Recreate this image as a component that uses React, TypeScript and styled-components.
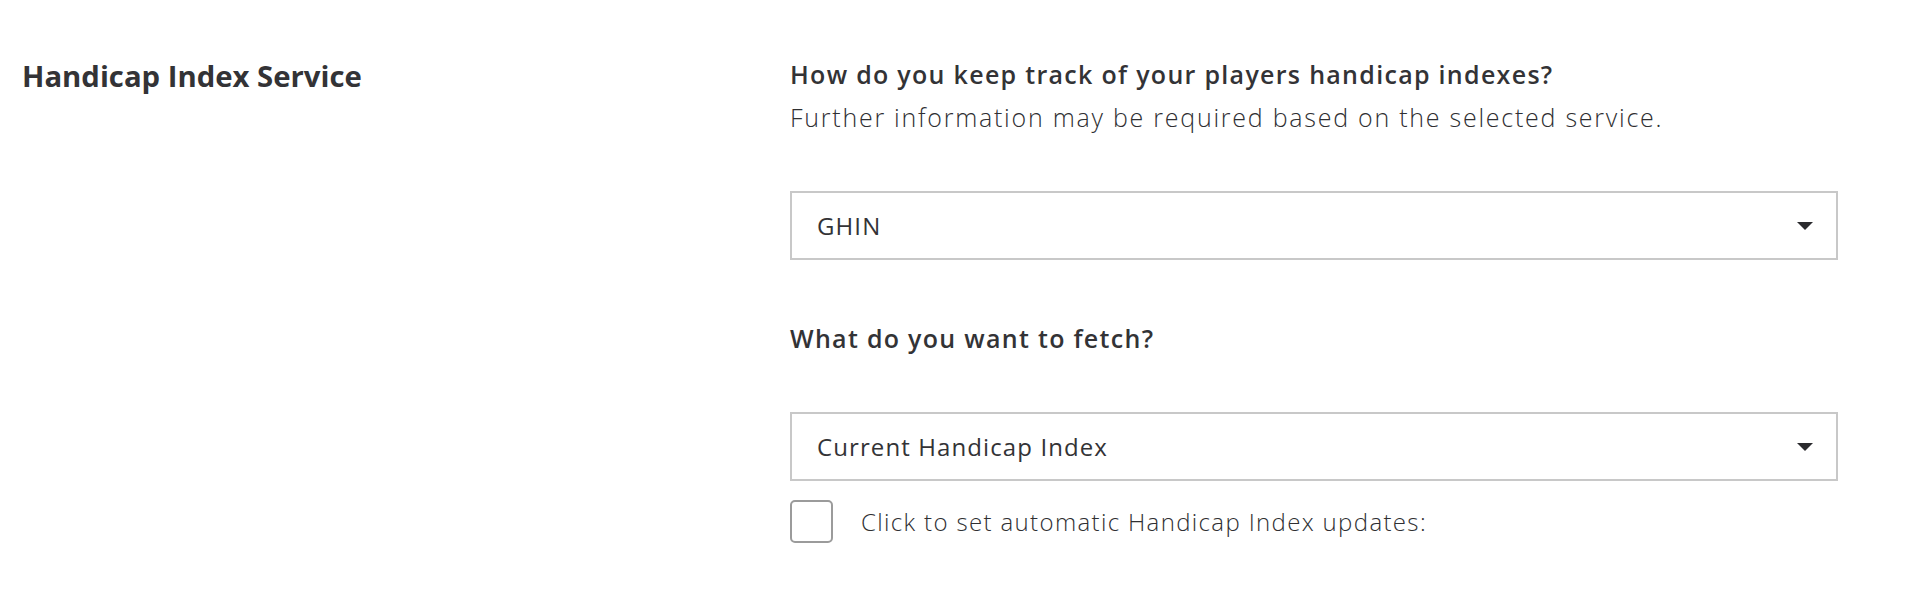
import styled, { createGlobalStyle } from 'styled-components';

const GlobalStyle = createGlobalStyle`
  * { box-sizing: border-box; }
  body {
    margin: 0;
    background: #ffffff;
    font-family: "Open Sans", "Noto Sans", sans-serif;
    color: #333336;
  }
`

const Section = styled.section`
  display: flex;
  align-items: flex-start;
  padding: 58px 22px 40px;
`
const Aside = styled.div`
  width: 768px;
  flex-shrink: 0;
`
const Title = styled.h2`
  margin: 0;
  font-size: 29.3px;
  line-height: 36px;
  font-weight: 700;
`
const Content = styled.div`
  width: 1048px;
  display: flex;
  flex-direction: column;
`
const Question = styled.h3<{ $gap?: number }>`
  margin: ${(p) => p.$gap ?? 0}px 0 0;
  font-size: 25px;
  line-height: 32px;
  font-weight: 600;
  letter-spacing: 1.3px;
`
const Hint = styled.p`
  margin: 11px 0 0;
  font-size: 25px;
  line-height: 32px;
  font-weight: 300;
  letter-spacing: 1.75px;
  color: #2f2f32;
`
const Select = styled.div<{ $gap: number }>`
  margin-top: ${(p) => p.$gap}px;
  height: 69px;
  border: 2px solid #c8c8c8;
  display: flex;
  align-items: center;
  justify-content: space-between;
  padding: 0 23px 0 25px;
  font-size: 24px;
  font-weight: 400;
  letter-spacing: 1.1px;
  cursor: pointer;
`
const Caret = styled.svg`
  width: 16px;
  height: 8px;
  fill: #2b2b2e;
`
const CheckRow = styled.label`
  margin-top: 19px;
  display: flex;
  align-items: center;
  gap: 28px;
  cursor: pointer;
`
const Box = styled.span`
  width: 43px;
  height: 43px;
  border: 2px solid #9b9b9b;
  border-radius: 5px;
  flex-shrink: 0;
`
const CheckText = styled.span`
  font-size: 24px;
  font-weight: 300;
  letter-spacing: 1.35px;
  color: #2f2f32;
`

function Dropdown({ value, gap }: { value: string; gap: number }) {
  return (
    <Select $gap={gap}>
      <span>{value}</span>
      <Caret viewBox="0 0 16 8">
        <polygon points="0,0 16,0 8,8" />
      </Caret>
    </Select>
  )
}

export default function App() {
  return (
    <>
      <GlobalStyle />
      <Section>
        <Aside>
          <Title>Handicap Index Service</Title>
        </Aside>
        <Content>
          <Question>How do you keep track of your players handicap indexes?</Question>
          <Hint>Further information may be required based on the selected service.</Hint>
          <Dropdown value="GHIN" gap={58} />
          <Question $gap={62}>What do you want to fetch?</Question>
          <Dropdown value="Current Handicap Index" gap={58} />
          <CheckRow>
            <Box />
            <CheckText>Click to set automatic Handicap Index updates:</CheckText>
          </CheckRow>
        </Content>
      </Section>
    </>
  )
}
